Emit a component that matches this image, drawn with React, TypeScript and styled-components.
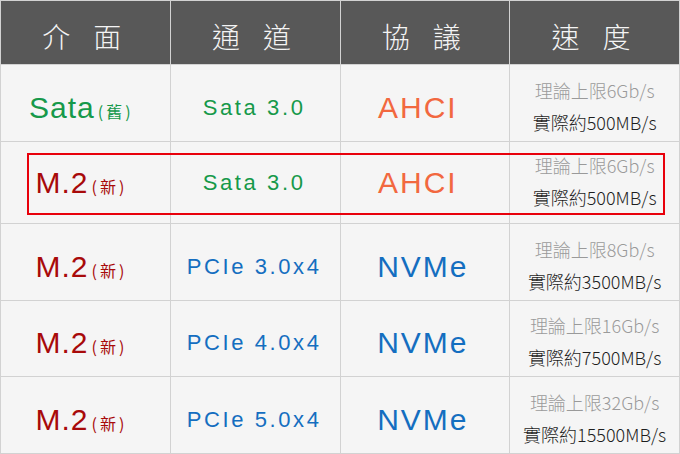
import React from 'react'
import styled, { createGlobalStyle } from 'styled-components'

const GlobalStyle = createGlobalStyle`
    html, body {
        margin: 0;
        padding: 0;
        background: #ffffff;
    }
`

type Row = {
    iface: string
    note: string
    ifaceColor: string
    channel: string
    channelColor: string
    protocol: string
    protocolColor: string
    protocolShift: number
    theory: string
    actual: string
    height: number
    offset: number
}

const GREEN = '#16994a'
const DARK_RED = '#a80a0a'
const ORANGE = '#f2683f'
const BLUE = '#146ec0'

const rows: Row[] = [
    { iface: 'Sata', note: '(舊)', ifaceColor: GREEN, channel: 'Sata 3.0', channelColor: GREEN, protocol: 'AHCI', protocolColor: ORANGE, protocolShift: 14, theory: '理論上限6Gb/s', actual: '實際約500MB/s', height: 76, offset: 9 },
    { iface: 'M.2', note: '(新)', ifaceColor: DARK_RED, channel: 'Sata 3.0', channelColor: GREEN, protocol: 'AHCI', protocolColor: ORANGE, protocolShift: 14, theory: '理論上限6Gb/s', actual: '實際約500MB/s', height: 81, offset: 0 },
    { iface: 'M.2', note: '(新)', ifaceColor: DARK_RED, channel: 'PCIe 3.0x4', channelColor: BLUE, protocol: 'NVMe', protocolColor: BLUE, protocolShift: 4, theory: '理論上限8Gb/s', actual: '實際約3500MB/s', height: 76, offset: 9 },
    { iface: 'M.2', note: '(新)', ifaceColor: DARK_RED, channel: 'PCIe 4.0x4', channelColor: BLUE, protocol: 'NVMe', protocolColor: BLUE, protocolShift: 4, theory: '理論上限16Gb/s', actual: '實際約7500MB/s', height: 75, offset: 9 },
    { iface: 'M.2', note: '(新)', ifaceColor: DARK_RED, channel: 'PCIe 5.0x4', channelColor: BLUE, protocol: 'NVMe', protocolColor: BLUE, protocolShift: 4, theory: '理論上限32Gb/s', actual: '實際約15500MB/s', height: 76, offset: 9 },
]

const headers = ['介面', '通道', '協議', '速度']

const App: React.FC = () => {
    return (
        <>
            <GlobalStyle />
            <Wrapper>
                <Table $rows={rows.map(r => r.height)}>
                    {headers.map(h => (
                        <HeadCell key={h}>{h}</HeadCell>
                    ))}
                    {rows.map((r, i) => (
                        <React.Fragment key={i}>
                            <Cell $offset={r.offset}>
                                <Interface $color={r.ifaceColor}>
                                    {r.iface}
                                    <Note>{r.note}</Note>
                                </Interface>
                            </Cell>
                            <Cell $offset={r.offset}>
                                <Channel $color={r.channelColor}>{r.channel}</Channel>
                            </Cell>
                            <Cell $offset={r.offset}>
                                <Protocol $color={r.protocolColor} $shift={r.protocolShift}>{r.protocol}</Protocol>
                            </Cell>
                            <Cell $offset={r.offset}>
                                <Speed>
                                    <Theory>{r.theory}</Theory>
                                    <Actual>{r.actual}</Actual>
                                </Speed>
                            </Cell>
                        </React.Fragment>
                    ))}
                </Table>
                <Highlight />
            </Wrapper>
        </>
    )
}

const Wrapper = styled.div`
    position: relative;
    width: 680px;
    height: 454px;
`

const Table = styled.div<{ $rows: number[] }>`
    display: grid;
    grid-template-columns: repeat(4, 1fr);
    grid-template-rows: 63px ${p => p.$rows.map(h => `${h}px`).join(' ')};
    gap: 1px;
    padding: 1px;
    box-sizing: border-box;
    width: 680px;
    background: #d2d2d2;
`

const HeadCell = styled.div`
    background: #585858;
    color: #f4f4f4;
    display: flex;
    align-items: center;
    justify-content: center;
    padding: 6px 0 0 16px;
    box-sizing: border-box;
    font-family: "Noto Sans CJK TC", "Noto Sans", sans-serif;
    font-size: 28px;
    font-weight: 300;
    letter-spacing: 23px;
`

const Cell = styled.div<{ $offset: number }>`
    background: #f5f5f5;
    display: flex;
    align-items: center;
    justify-content: center;
    padding-top: ${p => p.$offset}px;
    box-sizing: border-box;
`

const Interface = styled.span<{ $color: string }>`
    color: ${p => p.$color};
    font-family: "Liberation Sans", Arial, sans-serif;
    font-size: 30px;
    line-height: 1;
    letter-spacing: 1px;
    padding-right: 8px;
`

const Note = styled.span`
    font-family: "Noto Sans CJK TC", sans-serif;
    font-size: 16px;
    letter-spacing: 3px;
    margin-left: 3px;
`

const Channel = styled.span<{ $color: string }>`
    color: ${p => p.$color};
    font-family: "Liberation Sans", Arial, sans-serif;
    font-size: 22px;
    line-height: 1;
    letter-spacing: 2.6px;
    padding-right: 2px;
`

const Protocol = styled.span<{ $color: string; $shift: number }>`
    color: ${p => p.$color};
    font-family: "Liberation Sans", Arial, sans-serif;
    font-size: 30px;
    line-height: 1;
    letter-spacing: 2px;
    padding-right: ${p => p.$shift}px;
`

const Speed = styled.div`
    display: flex;
    flex-direction: column;
    align-items: center;
    font-family: "Noto Sans CJK TC", sans-serif;
    font-size: 18px;
    font-weight: 300;
    line-height: 32px;
    margin-top: -4px;
`

const Theory = styled.span`
    color: #9a9a9a;
`

const Actual = styled.span`
    color: #1e1e1e;
`

const Highlight = styled.div`
    position: absolute;
    left: 27px;
    top: 153px;
    width: 638px;
    height: 62px;
    border: 2px solid #e8000b;
    box-sizing: border-box;
    pointer-events: none;
`

export default App
